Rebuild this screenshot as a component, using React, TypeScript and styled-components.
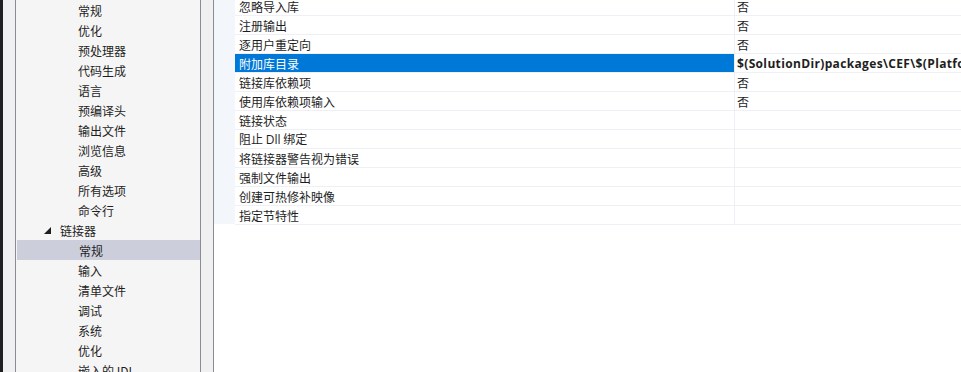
import React from "react";
import styled, { createGlobalStyle } from "styled-components";

const Global = createGlobalStyle`
  html, body { margin: 0; padding: 0; background: #ffffff; }
  body {
    font-family: "Segoe UI", "Noto Sans", "Noto Sans CJK SC", sans-serif;
    font-size: 12px;
    color: #1e1e1e;
  }
`;

const Page = styled.div`
  display: flex;
  width: 961px;
  height: 372px;
  overflow: hidden;
  background: #f0f0f0;
`;

const DarkStrip = styled.div`
  width: 3px;
  flex: none;
  background: #1f1f1f;
`;

const Spacer = styled.div<{ $w: number }>`
  width: ${(p) => p.$w}px;
  flex: none;
  background: #f0f0f0;
`;

const TreePanel = styled.div`
  width: 184px;
  flex: none;
  background: #f5f5f5;
  border-left: 1px solid #8c8c94;
  border-right: 1px solid #8c8c94;
  padding-top: 0;
  overflow: hidden;
  font-family: "Noto Sans CJK SC", "Noto Sans", sans-serif;
`;

const TreeRow = styled.div<{ $depth: number; $selected?: boolean }>`
  height: 20px;
  display: flex;
  align-items: center;
  padding-left: ${(p) => (p.$depth === 1 ? 28 : 62)}px;
  margin-left: ${(p) => (p.$selected ? 1 : 0)}px;
  background: ${(p) => (p.$selected ? "#cccedb" : "transparent")};
  white-space: nowrap;
  font-size: 12px;
  color: #1e1e1e;
`;

const Expander = styled.span`
  width: 16px;
  display: inline-flex;
  align-items: center;
  justify-content: flex-start;
`;

const GridPanel = styled.div`
  flex: 1;
  display: flex;
  border-left: 1px solid #8c8c94;
  background: #ffffff;
  overflow: hidden;
  align-items: flex-start;
`;

const Gutter = styled.div`
  width: 21px;
  flex: none;
  height: 224px;
  background: #f3f6fb;
`;

const Rows = styled.div`
  flex: 1;
  margin-top: -4px;
  border-bottom: 1px solid #eef0f5;
  font-family: "Noto Sans CJK SC", "Noto Sans", sans-serif;
`;

const Row = styled.div`
  display: flex;
  height: 18px;
  border-top: 1px solid #eef0f5;
`;

const NameCell = styled.div<{ $selected?: boolean }>`
  width: 495px;
  flex: none;
  padding-left: 4px;
  display: flex;
  align-items: center;
  background: ${(p) => (p.$selected ? "#0078d7" : "#ffffff")};
  color: ${(p) => (p.$selected ? "#ffffff" : "#1e1e1e")};
  white-space: pre;
`;

const ValueCell = styled.div<{ $bold?: boolean }>`
  flex: 1;
  border-left: 1px solid #eef0f5;
  padding-left: 2px;
  display: flex;
  align-items: center;
  white-space: nowrap;
  overflow: hidden;
  font-weight: ${(p) => (p.$bold ? 700 : 400)};
  font-family: ${(p) =>
    p.$bold ? `"Open Sans", "Noto Sans CJK SC", sans-serif` : `"Noto Sans CJK SC", sans-serif`};
  letter-spacing: ${(p) => (p.$bold ? "0.35px" : "0")};
`;

const Latin = styled.span`
  font-family: "Open Sans", "Noto Sans", sans-serif;
`;

const treeItems: { label: string; depth: number; expander?: boolean; selected?: boolean }[] = [
  { label: "常规", depth: 2 },
  { label: "优化", depth: 2 },
  { label: "预处理器", depth: 2 },
  { label: "代码生成", depth: 2 },
  { label: "语言", depth: 2 },
  { label: "预编译头", depth: 2 },
  { label: "输出文件", depth: 2 },
  { label: "浏览信息", depth: 2 },
  { label: "高级", depth: 2 },
  { label: "所有选项", depth: 2 },
  { label: "命令行", depth: 2 },
  { label: "链接器", depth: 1, expander: true },
  { label: "常规", depth: 2, selected: true },
  { label: "输入", depth: 2 },
  { label: "清单文件", depth: 2 },
  { label: "调试", depth: 2 },
  { label: "系统", depth: 2 },
  { label: "优化", depth: 2 },
  { label: "嵌入的 IDL", depth: 2 },
];

const props: { name: React.ReactNode; value?: string; bold?: boolean; selected?: boolean }[] = [
  { name: "忽略导入库", value: "否" },
  { name: "注册输出", value: "否" },
  { name: "逐用户重定向", value: "否" },
  {
    name: "附加库目录",
    value: "$(SolutionDir)packages\\CEF\\$(Platform)\\$(Configuration)",
    bold: true,
    selected: true,
  },
  { name: "链接库依赖项", value: "否" },
  { name: "使用库依赖项输入", value: "否" },
  { name: "链接状态" },
  {
    name: (
      <span>
        阻止 <Latin>Dll</Latin> 绑定
      </span>
    ),
  },
  { name: "将链接器警告视为错误" },
  { name: "强制文件输出" },
  { name: "创建可热修补映像" },
  { name: "指定节特性" },
];

export default function App() {
  return (
    <>
      <Global />
      <Page>
        <DarkStrip />
        <Spacer $w={12} />
        <TreePanel>
          {treeItems.map((it, i) => (
            <TreeRow key={i} $depth={it.depth} $selected={it.selected}>
              {it.expander && (
                <Expander>
                  <svg width="7" height="7" viewBox="0 0 7 7">
                    <polygon points="7,0 7,7 0,7" fill="#1e1e1e" />
                  </svg>
                </Expander>
              )}
              {it.label}
            </TreeRow>
          ))}
        </TreePanel>
        <Spacer $w={12} />
        <GridPanel>
          <Gutter />
          <Rows>
            {props.map((p, i) => (
              <Row key={i}>
                <NameCell $selected={p.selected}>{p.name}</NameCell>
                <ValueCell $bold={p.bold}>{p.value ?? ""}</ValueCell>
              </Row>
            ))}
          </Rows>
        </GridPanel>
      </Page>
    </>
  );
}
